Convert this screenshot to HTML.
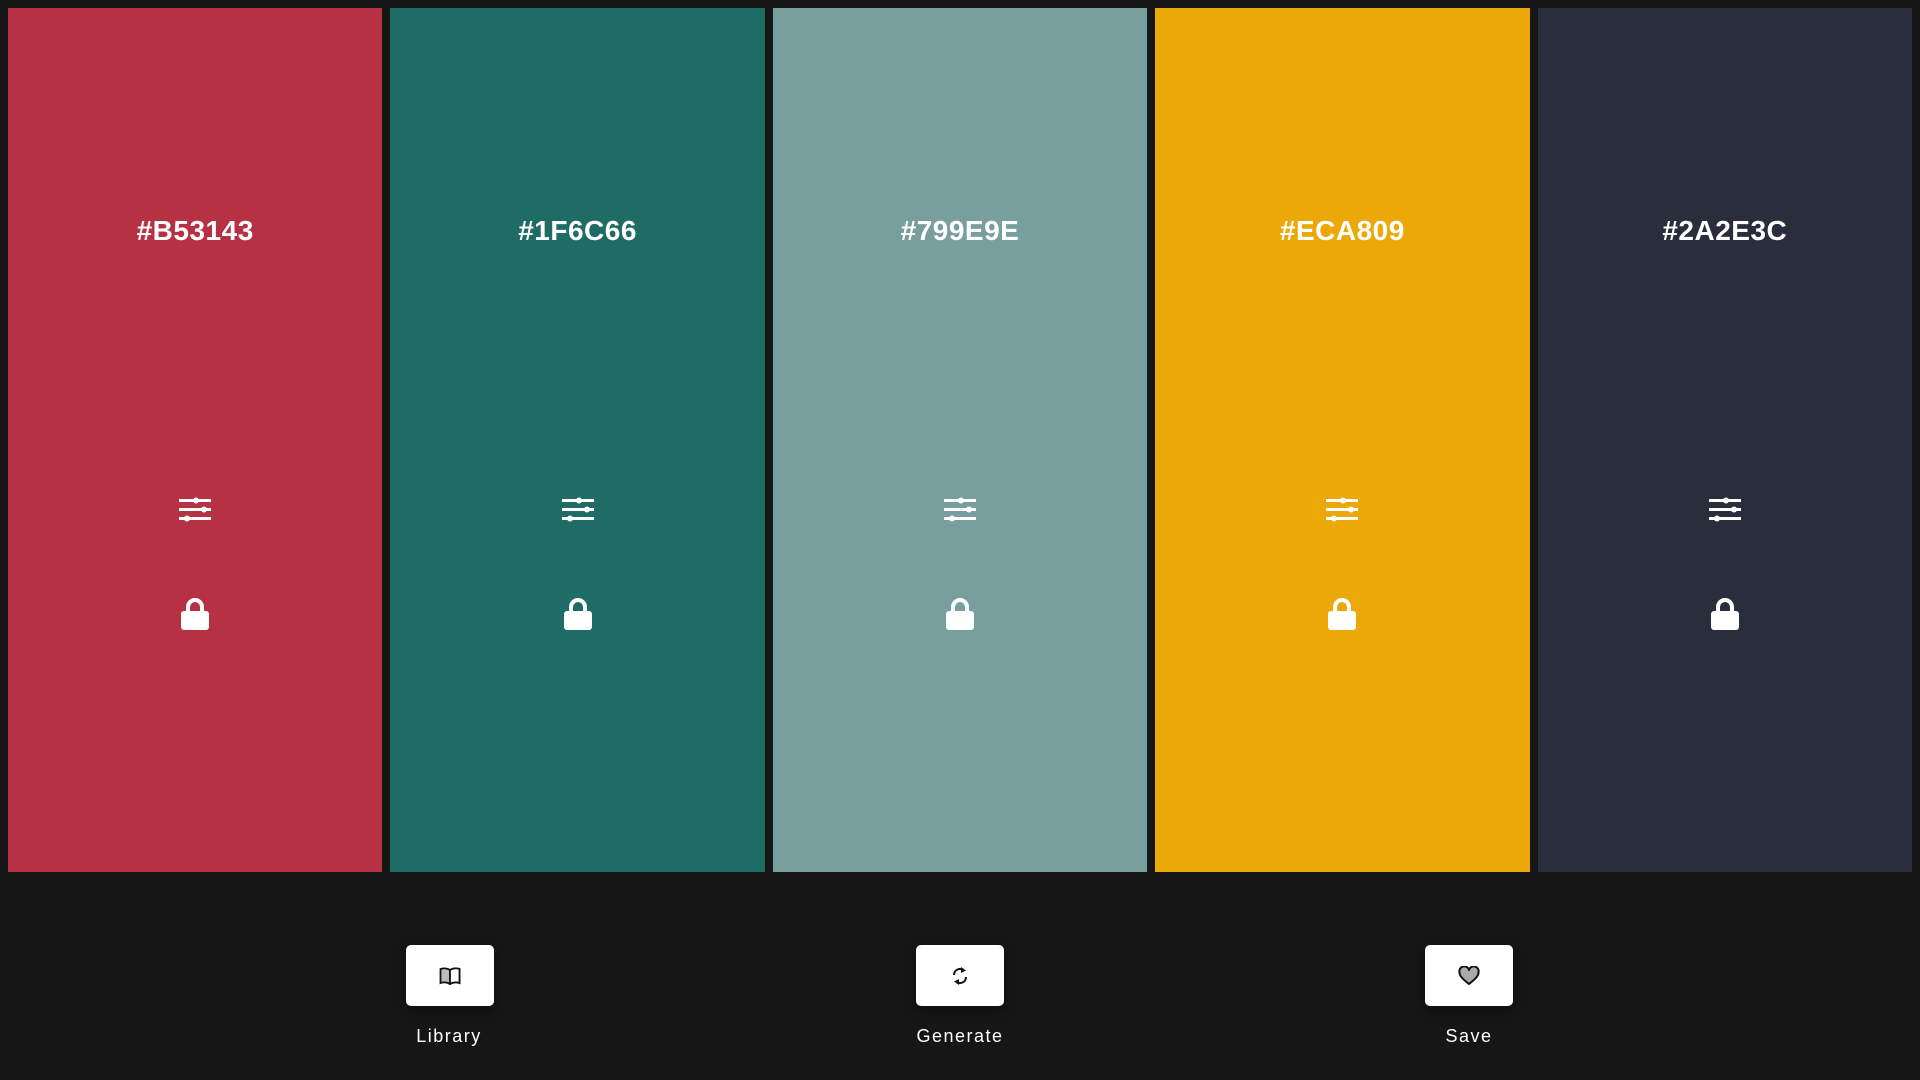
<!DOCTYPE html>
<html><head><meta charset="utf-8"><style>
html,body{margin:0;padding:0;background:#161616;width:1920px;height:1080px;overflow:hidden;font-family:"Liberation Sans",sans-serif}
.p{position:absolute;top:8px;height:864px;width:374.4px}
.h{position:absolute;top:205px;left:0;right:0;text-align:center;color:#fff;font-size:28px;font-weight:bold;letter-spacing:0.5px;line-height:36px}
.s{position:absolute;top:487px;left:50%;margin-left:-17px}
.l{position:absolute;top:590px;left:50%;margin-left:-15px}
.b{position:absolute;top:945px;width:88px;height:61px;background:#fff;border-radius:5px;box-shadow:0 4px 12px rgba(0,0,0,.4);display:flex;align-items:center;justify-content:center}
.t{position:absolute;top:1026px;width:160px;text-align:center;color:#fff;font-size:18px;letter-spacing:1.5px}
</style></head><body>
<div class="p" style="left:8px;background:#B53143"><div class="h">#B53143</div>
<svg class="s" width="34" height="30" viewBox="0 0 34 30"><g fill="#fff"><rect x="1" y="4" width="32" height="3"/><rect x="1" y="13" width="32" height="3"/><rect x="1" y="22" width="32" height="3"/><circle cx="18" cy="5.5" r="3"/><circle cx="26" cy="14.5" r="3"/><circle cx="9" cy="23.5" r="3"/></g></svg>
<svg class="l" width="30" height="32" viewBox="0 0 30 32"><path d="M8 14V9a7 7 0 0 1 14 0v5" fill="none" stroke="#fff" stroke-width="4"/><rect x="1" y="13" width="28" height="19" rx="3" fill="#fff"/></svg></div>
<div class="p" style="left:390.4px;background:#1F6C66"><div class="h">#1F6C66</div>
<svg class="s" width="34" height="30" viewBox="0 0 34 30"><g fill="#fff"><rect x="1" y="4" width="32" height="3"/><rect x="1" y="13" width="32" height="3"/><rect x="1" y="22" width="32" height="3"/><circle cx="18" cy="5.5" r="3"/><circle cx="26" cy="14.5" r="3"/><circle cx="9" cy="23.5" r="3"/></g></svg>
<svg class="l" width="30" height="32" viewBox="0 0 30 32"><path d="M8 14V9a7 7 0 0 1 14 0v5" fill="none" stroke="#fff" stroke-width="4"/><rect x="1" y="13" width="28" height="19" rx="3" fill="#fff"/></svg></div>
<div class="p" style="left:772.8px;background:#799E9E"><div class="h">#799E9E</div>
<svg class="s" width="34" height="30" viewBox="0 0 34 30"><g fill="#fff"><rect x="1" y="4" width="32" height="3"/><rect x="1" y="13" width="32" height="3"/><rect x="1" y="22" width="32" height="3"/><circle cx="18" cy="5.5" r="3"/><circle cx="26" cy="14.5" r="3"/><circle cx="9" cy="23.5" r="3"/></g></svg>
<svg class="l" width="30" height="32" viewBox="0 0 30 32"><path d="M8 14V9a7 7 0 0 1 14 0v5" fill="none" stroke="#fff" stroke-width="4"/><rect x="1" y="13" width="28" height="19" rx="3" fill="#fff"/></svg></div>
<div class="p" style="left:1155.2px;background:#ECA809"><div class="h">#ECA809</div>
<svg class="s" width="34" height="30" viewBox="0 0 34 30"><g fill="#fff"><rect x="1" y="4" width="32" height="3"/><rect x="1" y="13" width="32" height="3"/><rect x="1" y="22" width="32" height="3"/><circle cx="18" cy="5.5" r="3"/><circle cx="26" cy="14.5" r="3"/><circle cx="9" cy="23.5" r="3"/></g></svg>
<svg class="l" width="30" height="32" viewBox="0 0 30 32"><path d="M8 14V9a7 7 0 0 1 14 0v5" fill="none" stroke="#fff" stroke-width="4"/><rect x="1" y="13" width="28" height="19" rx="3" fill="#fff"/></svg></div>
<div class="p" style="left:1537.6px;background:#2A2E3C"><div class="h">#2A2E3C</div>
<svg class="s" width="34" height="30" viewBox="0 0 34 30"><g fill="#fff"><rect x="1" y="4" width="32" height="3"/><rect x="1" y="13" width="32" height="3"/><rect x="1" y="22" width="32" height="3"/><circle cx="18" cy="5.5" r="3"/><circle cx="26" cy="14.5" r="3"/><circle cx="9" cy="23.5" r="3"/></g></svg>
<svg class="l" width="30" height="32" viewBox="0 0 30 32"><path d="M8 14V9a7 7 0 0 1 14 0v5" fill="none" stroke="#fff" stroke-width="4"/><rect x="1" y="13" width="28" height="19" rx="3" fill="#fff"/></svg></div>

<div class="b" style="left:406px"><svg width="22" height="18" viewBox="0 0 22 18"><path d="M11 3C8 1 4 1 1.5 2v14c2.5-1 6.5-1 9.5 1 3-2 7-2 9.5-1V2C18 1 14 1 11 3z" fill="#bbb" stroke="#111" stroke-width="1.8"/><path d="M11 3v14" stroke="#111" stroke-width="1.8"/><path d="M11 3C14 1 18 1 20.5 2v14c-2.5-1-6.5-1-9.5 1z" fill="#fff" stroke="#111" stroke-width="1.8"/></svg></div>
<div class="t" style="left:369px">Library</div>
<div class="b" style="left:916px"><svg width="18" height="22" viewBox="0 0 18 22"><path d="M3 10a6 6 0 0 1 10-4.5" fill="none" stroke="#111" stroke-width="2"/><path d="M10 2l5 3.5-5 2.5z" fill="#111"/><path d="M15 12a6 6 0 0 1-10 4.5" fill="none" stroke="#111" stroke-width="2"/><path d="M8 20l-5-3.5 5-2.5z" fill="#111"/></svg></div>
<div class="t" style="left:880px">Generate</div>
<div class="b" style="left:1425px"><svg width="22" height="20" viewBox="0 0 22 20"><path d="M11 18C6 14 1.5 10.5 1.5 6.5A4.8 4.8 0 0 1 11 4a4.8 4.8 0 0 1 9.5 2.5C20.5 10.5 16 14 11 18z" fill="#aaa" stroke="#111" stroke-width="2" stroke-linejoin="round"/></svg></div>
<div class="t" style="left:1389px">Save</div>
</body></html>
